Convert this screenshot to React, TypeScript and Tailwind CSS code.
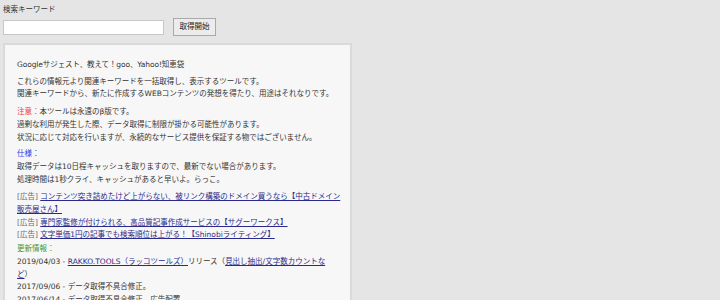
import React from "react";

const font = { fontFamily: '"DejaVu Sans", "Noto Sans CJK JP", sans-serif' };

const Ad = ({ children }: { children: React.ReactNode }) => (
  <div>
    <span className="text-[#6a6a7a]">[広告]</span>{" "}
    <a href="#" className="text-[#2a2a8c] underline">
      {children}
    </a>
  </div>
);

export default function App() {
  return (
    <div
      className="bg-[#e5e5e5] h-[300px] overflow-hidden px-[3px] pt-[5px] text-[#333] text-[7.5px] leading-[12.7px]"
      style={font}
    >
      {/* 検索フォーム */}
      <div className="leading-[10px]">検索キーワード</div>
      <div className="flex items-center mt-[3px]">
        <input
          type="text"
          className="w-[161px] h-[15px] bg-white border border-[#c8c8c8] outline-none"
        />
        <button className="ml-[9px] w-[43px] h-[18px] bg-[#ececec] border border-[#a9a9a9] text-[7.5px] text-[#222] leading-none">
          取得開始
        </button>
      </div>

      {/* 説明パネル */}
      <div className="mt-[7px] w-[349px] border-2 border-[#dadada] bg-[#f7f7f7] pl-[12px] pr-[4px] pt-[14px]">
        <p className="tracking-[-0.1px]">Googleサジェスト、教えて！goo、Yahoo!知恵袋</p>
        <p className="mt-[4px]">
          これらの情報元より関連キーワードを一括取得し、表示するツールです。
          <br />
          関連キーワードから、新たに作成するWEBコンテンツの発想を得たり、用途はそれなりです。
        </p>
        <p className="mt-[5px]">
          <span className="text-[#f03c3c]">注意：</span>本ツールは永遠のβ版です。
          <br />
          過剰な利用が発生した際、データ取得に制限が掛かる可能性があります。
          <br />
          状況に応じて対応を行いますが、永続的なサービス提供を保証する物ではございません。
        </p>
        <p className="mt-[4px]">
          <span className="text-[#3333ee]">仕様：</span>
          <br />
          取得データは10日程キャッシュを取りますので、最新でない場合があります。
          <br />
          処理時間は1秒クライ、キャッシュがあると早いよ。らっこ。
        </p>
        <div className="mt-[5px]">
          <Ad>コンテンツ突き詰めたけど上がらない、被リンク構築のドメイン買うなら【中古ドメイン販売屋さん】</Ad>
          <Ad>専門家監修が付けられる、高品質記事作成サービスの【サグーワークス】</Ad>
          <Ad>文字単価1円の記事でも検索順位は上がる！【Shinobiライティング】</Ad>
        </div>
        <div className="mt-[1px] pr-[9px]">
          <div className="text-[#3a9a3a]">更新情報：</div>
          <div>
            2019/04/03 -{" "}
            <a href="#" className="text-[#2a2a8c] underline">
              RAKKO.TOOLS（ラッコツールズ）
            </a>
            リリース（
            <a href="#" className="text-[#2a2a8c] underline">
              見出し抽出/文字数カウントなど
            </a>
            ）
          </div>
          <div>2017/09/06 - データ取得不具合修正。</div>
          <div>2017/06/14 - データ取得不具合修正。広告配置。</div>
          <div>2017/05/18 - 検索結果の表示を改善しました。</div>
        </div>
      </div>
    </div>
  );
}
